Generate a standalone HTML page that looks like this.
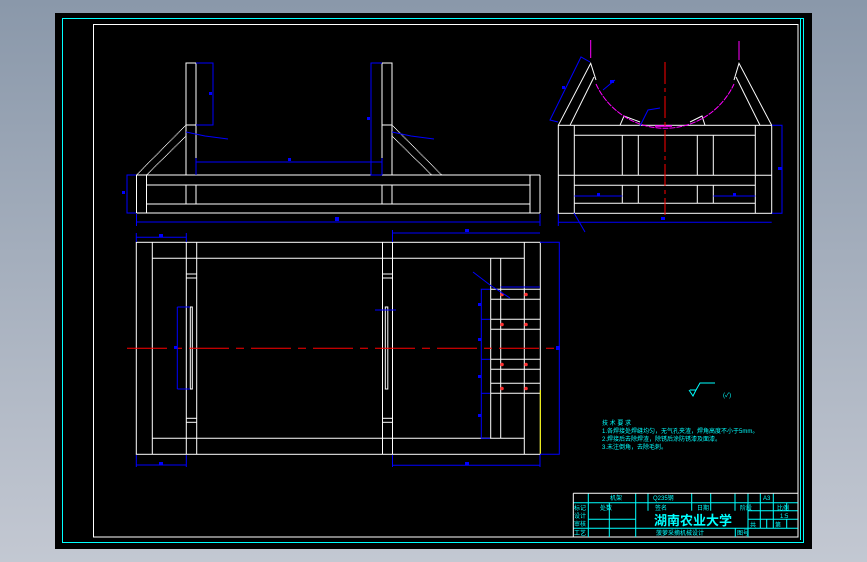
<!DOCTYPE html>
<html><head><meta charset="utf-8"><style>
html,body{margin:0;padding:0;width:867px;height:562px;overflow:hidden;background:linear-gradient(#8a98aa,#c3c8d2);}
svg{display:block}
text{font-family:"Liberation Sans","Noto Sans CJK SC",sans-serif;fill:#00ffff}
</style></head><body>
<svg width="867" height="562" viewBox="0 0 867 562" xmlns="http://www.w3.org/2000/svg">
<rect x="55" y="13" width="757" height="536" fill="#000"/>
<rect x="62.5" y="18.5" width="741" height="524" fill="none" stroke="#00ffff" stroke-width="1"/>
<line x1="800.5" y1="18.5" x2="800.5" y2="540" stroke="#00ffff"/>
<rect x="93.5" y="24.5" width="704.5" height="512.5" fill="none" stroke="#fff" stroke-width="1"/>

<g stroke="#fff" stroke-width="1" fill="none">
<!-- front view -->
<rect x="186" y="63" width="10" height="112"/>
<line x1="186" y1="125" x2="196" y2="125"/>
<rect x="382" y="63" width="10" height="112"/>
<line x1="382" y1="125" x2="392" y2="125"/>
<line x1="136.5" y1="175" x2="540" y2="175"/>
<line x1="146.5" y1="185" x2="530" y2="185"/>
<line x1="146.5" y1="204" x2="530" y2="204"/>
<line x1="136.5" y1="213" x2="540" y2="213"/>
<line x1="136.5" y1="175" x2="136.5" y2="213"/>
<line x1="146.5" y1="175" x2="146.5" y2="213"/>
<line x1="530" y1="175" x2="530" y2="213"/>
<line x1="540" y1="175" x2="540" y2="213"/>
<line x1="186" y1="185" x2="186" y2="204"/><line x1="196" y1="185" x2="196" y2="204"/>
<line x1="382" y1="185" x2="382" y2="204"/><line x1="392" y1="185" x2="392" y2="204"/>
<line x1="186" y1="125" x2="136.5" y2="175" stroke-dasharray="1 0.5"/>
<line x1="186" y1="136" x2="146.5" y2="175" stroke-dasharray="1 0.5"/>
<line x1="392" y1="125" x2="441.7" y2="175" stroke-dasharray="1 0.5"/>
<line x1="392" y1="136" x2="431.7" y2="175" stroke-dasharray="1 0.5"/>

<!-- side view -->
<rect x="558.3" y="125.3" width="213.4" height="88"/>
<line x1="574.3" y1="125.3" x2="574.3" y2="213.3"/>
<line x1="755.3" y1="125.3" x2="755.3" y2="213.3"/>
<line x1="574.3" y1="135.3" x2="755.3" y2="135.3"/>
<line x1="558.3" y1="175.3" x2="771.7" y2="175.3"/>
<line x1="574.3" y1="185.3" x2="755.3" y2="185.3"/>
<line x1="574.3" y1="203.3" x2="755.3" y2="203.3"/>
<line x1="622.3" y1="135.3" x2="622.3" y2="175.3"/><line x1="638.3" y1="135.3" x2="638.3" y2="175.3"/>
<line x1="697.3" y1="135.3" x2="697.3" y2="175.3"/><line x1="713.3" y1="135.3" x2="713.3" y2="175.3"/>
<line x1="622.3" y1="185.3" x2="622.3" y2="203.3"/><line x1="638.3" y1="185.3" x2="638.3" y2="203.3"/>
<line x1="697.3" y1="185.3" x2="697.3" y2="203.3"/><line x1="713.3" y1="185.3" x2="713.3" y2="203.3"/>
<polyline points="558.3,125.3 590.7,63.3 596,80"/>
<line x1="570" y1="125.3" x2="594" y2="77"/>
<polyline points="771.7,125.3 739,63.3 734,80"/>
<line x1="760" y1="125.3" x2="736" y2="77"/>
<polyline points="620,125.3 624,116 640,122"/>
<polyline points="705,125.3 702,116 690,122"/>

<!-- top view -->
<rect x="136.3" y="242.3" width="404" height="212"/>
<line x1="152.3" y1="242.3" x2="152.3" y2="454.3"/>
<line x1="186.3" y1="242.3" x2="186.3" y2="454.3"/>
<line x1="196.7" y1="242.3" x2="196.7" y2="454.3"/>
<line x1="382.5" y1="242.3" x2="382.5" y2="454.3"/>
<line x1="392.5" y1="242.3" x2="392.5" y2="454.3"/>
<line x1="524.3" y1="242.3" x2="524.3" y2="454.3"/>
<line x1="152.3" y1="258.3" x2="524.3" y2="258.3"/>
<line x1="152.3" y1="438.3" x2="524.3" y2="438.3"/>
<line x1="186.3" y1="274" x2="196.7" y2="274"/><line x1="186.3" y1="278" x2="196.7" y2="278"/>
<line x1="186.3" y1="418.3" x2="196.7" y2="418.3"/><line x1="186.3" y1="422.3" x2="196.7" y2="422.3"/>
<line x1="382.5" y1="274" x2="392.5" y2="274"/><line x1="382.5" y1="278" x2="392.5" y2="278"/>
<line x1="382.5" y1="418.3" x2="392.5" y2="418.3"/><line x1="382.5" y1="422.3" x2="392.5" y2="422.3"/>
<rect x="190.3" y="307" width="2" height="82"/>
<rect x="385.3" y="307" width="2.5" height="82"/>
<line x1="490.7" y1="258.3" x2="490.7" y2="438.3"/>
<line x1="500.7" y1="258.3" x2="500.7" y2="438.3"/>
<line x1="490.7" y1="289.3" x2="540.3" y2="289.3"/><line x1="490.7" y1="299.3" x2="540.3" y2="299.3"/>
<line x1="490.7" y1="319.3" x2="540.3" y2="319.3"/><line x1="490.7" y1="329.3" x2="540.3" y2="329.3"/>
<line x1="490.7" y1="359.3" x2="540.3" y2="359.3"/><line x1="490.7" y1="369.3" x2="540.3" y2="369.3"/>
<line x1="490.7" y1="383.3" x2="540.3" y2="383.3"/><line x1="490.7" y1="393.3" x2="540.3" y2="393.3"/>
</g>
<g fill="#ff3030">
<circle cx="502" cy="294.5" r="1.8"/><circle cx="526" cy="294.5" r="1.8"/>
<circle cx="502" cy="324.5" r="1.8"/><circle cx="526" cy="324.5" r="1.8"/>
<circle cx="502" cy="364.5" r="1.8"/><circle cx="526" cy="364.5" r="1.8"/>
<circle cx="502" cy="388.5" r="1.8"/><circle cx="526" cy="388.5" r="1.8"/>
</g>
<line x1="540.3" y1="390" x2="540.3" y2="454" stroke="#ffff00"/>

<!-- magenta -->
<g stroke="#ff00ff" fill="none">
<path d="M596,84 A75.9,75.9 0 0 0 734,84" stroke-dasharray="6 1"/>
<line x1="590.7" y1="40" x2="590.7" y2="58"/>
<line x1="739" y1="41" x2="739" y2="60"/>
<line x1="655" y1="126" x2="672" y2="126" stroke-width="1.5"/>
</g>

<!-- red center lines -->
<g stroke="#ff0000" stroke-width="1">
<line x1="665" y1="62" x2="665" y2="215" stroke-dasharray="22 4 4 4"/>
<line x1="127" y1="348.3" x2="557" y2="348.3" stroke-dasharray="40 7 8 7"/>
</g>

<!-- blue dims -->
<g stroke="#0000ff" fill="none" stroke-width="1">
<polyline points="196,63 213,63 213,125 196,125"/>
<line x1="196" y1="162" x2="382" y2="162"/>
<line x1="196" y1="158" x2="196" y2="175"/><line x1="382" y1="158" x2="382" y2="175"/>
<polyline points="382,63 371,63 371,175 382,175"/>
<line x1="136.5" y1="222" x2="540" y2="222"/>
<line x1="136.5" y1="214" x2="136.5" y2="226"/><line x1="540" y1="214" x2="540" y2="226"/>
<polyline points="136,175 127,175 127,213 136,213"/>
<polyline points="186,132 205,136 228,139"/>
<polyline points="392,132 411,136 434,139"/>
<line x1="558.3" y1="222.3" x2="771.7" y2="222.3"/>
<line x1="558.3" y1="214" x2="558.3" y2="226"/>
<polyline points="772,125.3 782,125.3 782,213.3 772,213.3"/>
<line x1="574.3" y1="196" x2="622.3" y2="196"/>
<line x1="713.3" y1="196" x2="755.3" y2="196"/>
<polyline points="558,122 550,120 581,57 590,62"/>
<polyline points="603,90 615,80"/>
<polyline points="640,126 648,110 660,108"/>
<line x1="574" y1="213" x2="585" y2="232"/>
<line x1="136.3" y1="237.3" x2="186.3" y2="237.3"/>
<line x1="136.3" y1="233" x2="136.3" y2="242"/><line x1="186.3" y1="233" x2="186.3" y2="242"/>
<line x1="136.3" y1="465" x2="186.3" y2="465"/>
<line x1="136.3" y1="455" x2="136.3" y2="467"/><line x1="186.3" y1="455" x2="186.3" y2="467"/>
<line x1="392.5" y1="233" x2="540" y2="233"/>
<line x1="392.5" y1="230" x2="392.5" y2="242"/>
<line x1="392.5" y1="465.3" x2="540" y2="465.3"/>
<line x1="392.5" y1="455" x2="392.5" y2="467"/><line x1="540" y1="455" x2="540" y2="467"/>
<polyline points="540,242.3 559.3,242.3 559.3,454.3 540,454.3"/>
<polyline points="177.3,307 190,307"/><polyline points="177.3,389 190,389"/>
<line x1="177.3" y1="307" x2="177.3" y2="389"/>
<polyline points="490,289.3 481.3,289.3 481.3,438.3 490,438.3"/>
<line x1="481.3" y1="319.3" x2="490" y2="319.3"/><line x1="481.3" y1="359.3" x2="490" y2="359.3"/><line x1="481.3" y1="393.3" x2="490" y2="393.3"/>
<polyline points="473,272 490,285 510,298"/>
<line x1="500.7" y1="287" x2="540" y2="287"/>
<line x1="375" y1="310" x2="396" y2="310"/>
</g>
<g fill="#0000ff" font-size="5">
<rect x="209" y="92" width="3" height="3"/><rect x="288" y="158" width="3" height="3"/><rect x="367" y="117" width="3" height="3"/>
<rect x="335" y="217" width="4" height="4"/><rect x="122" y="191" width="3" height="3"/><rect x="661" y="217" width="4" height="3"/>
<rect x="778" y="167" width="4" height="3"/><rect x="597" y="193" width="3" height="3"/><rect x="733" y="193" width="3" height="3"/>
<rect x="159" y="234" width="4" height="3"/><rect x="159" y="462" width="4" height="3"/><rect x="465" y="229" width="4" height="3"/>
<rect x="465" y="462" width="4" height="3"/><rect x="556" y="346" width="4" height="4"/><rect x="174" y="346" width="3" height="3"/>
<rect x="478" y="303" width="3" height="3"/><rect x="478" y="338" width="3" height="3"/><rect x="478" y="375" width="3" height="3"/><rect x="478" y="414" width="3" height="3"/>
<rect x="562" y="86" width="3" height="3"/><rect x="610" y="80" width="4" height="3"/>
</g>

<!-- roughness + notes -->
<g stroke="#00ffff" fill="none">
<polyline points="689,390 693,396 696,390 690,390"/>
<polyline points="696,390 700,383 715,383"/>
</g>
<text x="723" y="397" font-size="6">(✓)</text>
<g font-size="6">
<text x="602" y="425">技 术 要 求</text>
<text x="602" y="433">1.各焊接处焊缝均匀，无气孔夹渣，焊角高度不小于5mm。</text>
<text x="602" y="441">2.焊接后去除焊渣，除锈后涂防锈漆及面漆。</text>
<text x="602" y="449">3.未注倒角，去除毛刺。</text>
</g>

<!-- title block -->
<g stroke="#00ffff" fill="none" stroke-width="1">
<line x1="573.3" y1="502.7" x2="797.7" y2="502.7"/>
<line x1="588.3" y1="519.3" x2="635.7" y2="519.3"/>
<line x1="748" y1="519.3" x2="797.7" y2="519.3"/>
<line x1="573.3" y1="528.3" x2="797.7" y2="528.3"/>
<line x1="748" y1="510.7" x2="797.7" y2="510.7"/>
<line x1="588.3" y1="493.3" x2="588.3" y2="537"/>
<line x1="609.3" y1="502.7" x2="609.3" y2="537"/>
<line x1="635.7" y1="493.3" x2="635.7" y2="537"/>
<line x1="648" y1="493.3" x2="648" y2="510.7"/>
<line x1="691.7" y1="493.3" x2="691.7" y2="510.7"/>
<line x1="710.7" y1="493.3" x2="710.7" y2="510.7"/>
<line x1="735" y1="493.3" x2="735" y2="510.7"/>
<line x1="735.3" y1="528.3" x2="735.3" y2="537"/>
<line x1="748" y1="493.3" x2="748" y2="537"/>
<line x1="760.3" y1="493.3" x2="760.3" y2="528.3"/>
<line x1="773.3" y1="493.3" x2="773.3" y2="528.3"/>
<line x1="786.7" y1="502.7" x2="786.7" y2="510.7"/>
<line x1="766.7" y1="519.3" x2="766.7" y2="528.3"/>
<line x1="786.7" y1="519.3" x2="786.7" y2="528.3"/>
</g>
<line x1="573.3" y1="493.3" x2="797.7" y2="493.3" stroke="#fff"/>
<line x1="573.3" y1="493.3" x2="573.3" y2="537" stroke="#fff"/>
<g font-size="6">
<text x="610" y="500">机架</text><text x="653" y="500">Q235钢</text><text x="763" y="500">A3</text>
<text x="574" y="510">标记</text><text x="600" y="510">处数</text><text x="655" y="510">签名</text><text x="697" y="510">日期</text><text x="740" y="510">阶段</text><text x="777" y="510">比例</text>
<text x="574" y="518">设计</text><text x="574" y="526">审核</text><text x="574" y="535">工艺</text>
<text x="780" y="518">1:5</text><text x="750" y="527">共</text><text x="775" y="527">第</text>
<text x="656" y="535">菠萝采摘机械设计</text><text x="737" y="535">图号</text>
</g>
<text x="654" y="525" font-size="13" font-weight="bold">湖南农业大学</text>
</svg>
</body></html>
